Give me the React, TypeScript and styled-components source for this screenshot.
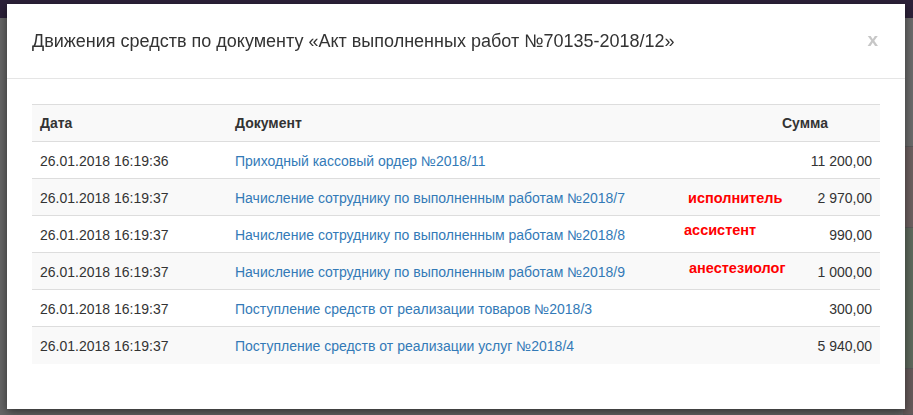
import styled, { createGlobalStyle } from "styled-components";

const GlobalStyle = createGlobalStyle`
  html, body {
    margin: 0;
    padding: 0;
    width: 913px;
    height: 415px;
    overflow: hidden;
    font-family: "Liberation Sans", Arial, sans-serif;
  }
`;

const Page = styled.div`
  width: 913px;
  height: 415px;
  background: #656565;
  display: flex;
  flex-direction: column;
`;

const NavBar = styled.div`
  height: 22px;
  background: #2c2139;
`;

const PageBody = styled.div`
  flex: 1;
  display: flex;
  justify-content: flex-end;
`;

const SideTint = styled.div`
  width: 10px;
  display: flex;
  flex-direction: column;
`;

const TintBand = styled.div<{ $h: number; $c: string }>`
  height: ${(p) => p.$h}px;
  background: ${(p) => p.$c};
  border-bottom: 1px solid #5a5a5a;
`;

const Overlay = styled.div`
  position: fixed;
  inset: 0;
  padding: 4px 0 0 7px;
`;

const Modal = styled.div`
  width: 898px;
  height: 405px;
  background: #fff;
  box-shadow: 0 3px 9px rgba(0, 0, 0, 0.5);
  display: flex;
  flex-direction: column;
`;

const Header = styled.div`
  height: 75px;
  padding: 0 25px;
  border-bottom: 1px solid #e5e5e5;
  display: flex;
  align-items: center;
  justify-content: space-between;
  box-sizing: border-box;
`;

const Title = styled.h4`
  margin: 0;
  font-size: 18px;
  font-weight: normal;
  color: #333;
  line-height: 20px;
`;

const Close = styled.span`
  font-size: 19px;
  font-weight: bold;
  color: #c7c7c7;
  line-height: 1;
  margin-right: 2px;
  margin-top: -4px;
`;

const Body = styled.div`
  padding: 25px 25px 0;
`;

const TableWrap = styled.div`
  position: relative;
`;

const Table = styled.table`
  width: 848px;
  border-collapse: collapse;
  table-layout: fixed;
  font-size: 14px;
  color: #333;
`;

const Row = styled.tr<{ $striped?: boolean }>`
  height: 37px;
  background: ${(p) => (p.$striped ? "#f9f9f9" : "#fff")};
  border-top: 1px solid #ddd;
`;

const Th = styled.th<{ $w: number }>`
  width: ${(p) => p.$w}px;
  text-align: left;
  font-weight: bold;
  padding: 0 8px;
  box-sizing: border-box;
`;

const Td = styled.td<{ $right?: boolean }>`
  padding: 1px 8px 0;
  text-align: ${(p) => (p.$right ? "right" : "left")};
  white-space: nowrap;
`;

const DocLink = styled.a`
  color: #337ab7;
  text-decoration: none;
`;

const Note = styled.span<{ $x: number; $y: number }>`
  position: absolute;
  left: ${(p) => p.$x}px;
  top: ${(p) => p.$y}px;
  color: #ff0000;
  font-weight: bold;
  font-size: 14.5px;
  line-height: 16px;
`;

const rows = [
  ["26.01.2018 16:19:36", "Приходный кассовый ордер №2018/11", "11 200,00"],
  ["26.01.2018 16:19:37", "Начисление сотруднику по выполненным работам №2018/7", "2 970,00"],
  ["26.01.2018 16:19:37", "Начисление сотруднику по выполненным работам №2018/8", "990,00"],
  ["26.01.2018 16:19:37", "Начисление сотруднику по выполненным работам №2018/9", "1 000,00"],
  ["26.01.2018 16:19:37", "Поступление средств от реализации товаров №2018/3", "300,00"],
  ["26.01.2018 16:19:37", "Поступление средств от реализации услуг №2018/4", "5 940,00"],
];

const notes = [
  { text: "исполнитель", x: 656, y: 86 },
  { text: "ассистент", x: 652, y: 118 },
  { text: "анестезиолог", x: 657, y: 156 },
];

export default function App() {
  return (
    <>
      <GlobalStyle />
      <Page>
        <NavBar />
        <PageBody>
          <SideTint>
            <TintBand $h={128} $c="#6b6b6b" />
            <TintBand $h={80} $c="#6d6060" />
            <TintBand $h={140} $c="#5f6a5d" />
            <TintBand $h={45} $c="#665b5b" />
          </SideTint>
        </PageBody>
      </Page>
      <Overlay>
        <Modal>
          <Header>
            <Title>Движения средств по документу «Акт выполненных работ №70135-2018/12»</Title>
            <Close>x</Close>
          </Header>
          <Body>
            <TableWrap>
              <Table>
                <thead>
                  <Row $striped>
                    <Th $w={195}>Дата</Th>
                    <Th $w={547}>Документ</Th>
                    <Th $w={106}>Сумма</Th>
                  </Row>
                </thead>
                <tbody>
                  {rows.map((r, i) => (
                    <Row key={i} $striped={i % 2 === 1}>
                      <Td>{r[0]}</Td>
                      <Td>
                        <DocLink href="#">{r[1]}</DocLink>
                      </Td>
                      <Td $right>{r[2]}</Td>
                    </Row>
                  ))}
                </tbody>
              </Table>
              {notes.map((n) => (
                <Note key={n.text} $x={n.x} $y={n.y}>
                  {n.text}
                </Note>
              ))}
            </TableWrap>
          </Body>
        </Modal>
      </Overlay>
    </>
  );
}
